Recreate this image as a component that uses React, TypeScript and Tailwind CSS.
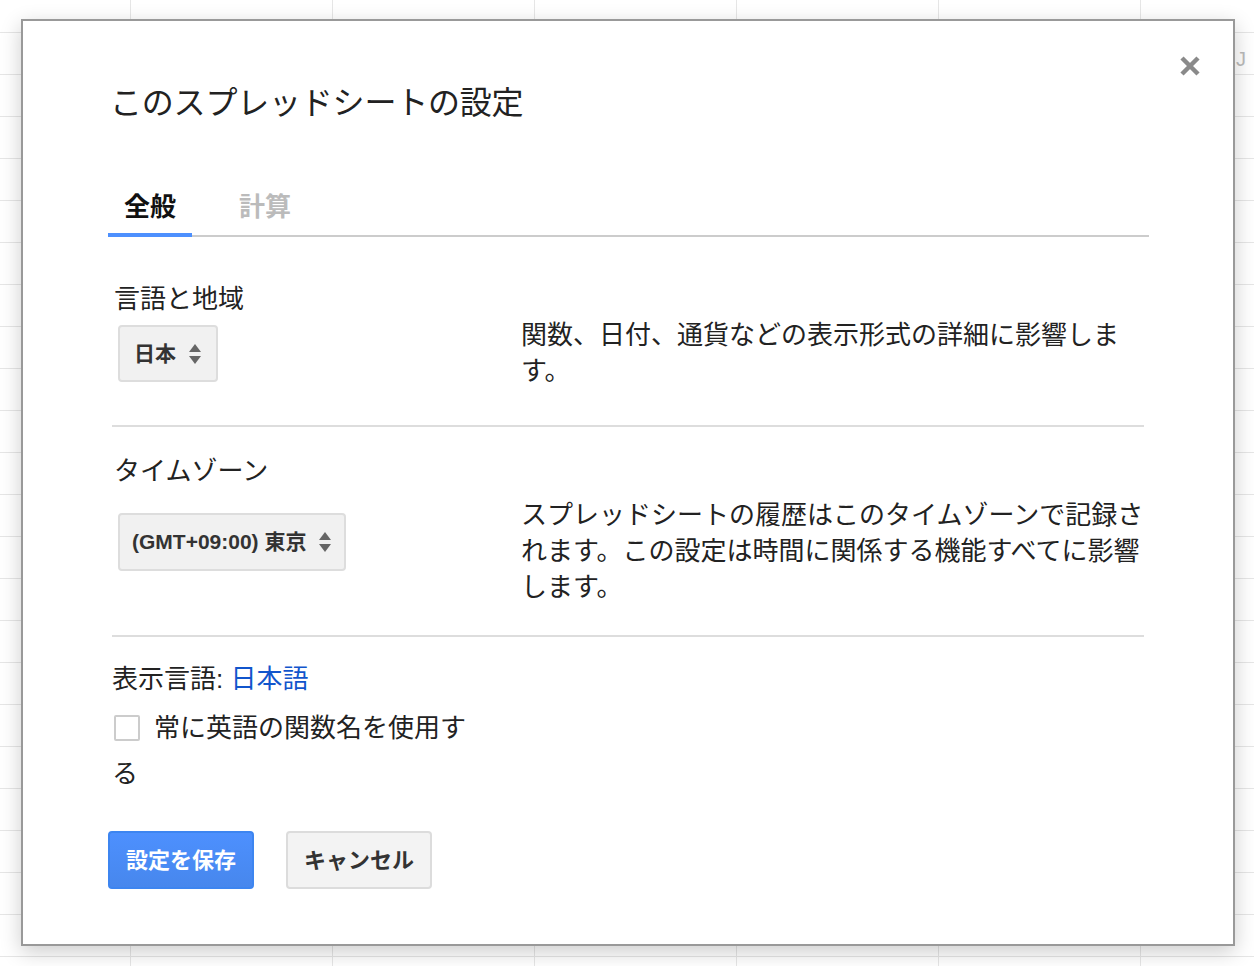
export default function App() {
  const jp = { fontFamily: '"Liberation Sans", "Noto Sans CJK JP", sans-serif' };
  const Arrows = () => (
    <svg width="14" height="22" viewBox="0 0 14 22" className="ml-3">
      <path d="M7 1 L13 9 L1 9 Z" fill="#666" />
      <path d="M7 21 L13 13 L1 13 Z" fill="#666" />
    </svg>
  );
  return (
    <div
      className="relative w-[1254px] h-[966px] overflow-hidden bg-white bg-[repeating-linear-gradient(to_bottom,transparent_0,transparent_41px,#e6e6e6_41px,#e6e6e6_42px),repeating-linear-gradient(to_right,transparent_0,transparent_201px,#e6e6e6_201px,#e6e6e6_202px)] bg-[position:-71px_-9px]"
      style={jp}
    >
      <div className="absolute right-[8px] top-[44px] text-[20px] text-[#bbb]">J</div>
      <div className="absolute left-[21px] top-[19px] w-[1214px] h-[927px] bg-white border-2 border-[#999] shadow-[0_6px_20px_rgba(0,0,0,0.2)] pl-[85px] pr-[84px] pt-[60px]">
        <svg className="absolute left-[1156px] top-[34px]" width="22" height="22" viewBox="0 0 22 22">
          <path d="M3 3 L19 19 M19 3 L3 19" stroke="#8a8a8a" strokeWidth="4.5" />
        </svg>
        <h1 className="text-[32px] leading-[44px] text-[#222] tracking-[-0.2px] ml-[2px]">このスプレッドシートの設定</h1>
        <div className="mt-[64px] flex border-b-2 border-[#ccc] h-[48px]">
          <div className="w-[84px] h-[48px] border-b-4 border-[#4d90fe] text-center font-bold text-[26px] leading-[36px] text-[#111]">全般</div>
          <div className="ml-[47px] font-bold text-[26px] leading-[36px] text-[#bbb]">計算</div>
        </div>

        <div className="mr-[5px] ml-[4px] border-b-2 border-[#ddd] pt-[44px] pb-[36px]">
          <div className="text-[26px] leading-[36px] text-[#222] ml-[2px]">言語と地域</div>
          <div className="grid grid-cols-[409px_1fr]">
            <div className="pt-[8px]">
              <div className="inline-flex items-center h-[57px] px-[14px] bg-[#f1f1f1] border-2 border-[#ddd] rounded-[4px] ml-[6px] font-bold text-[21px] text-[#333]">
                日本<Arrows />
              </div>
            </div>
            <div className="text-[26px] leading-[36px] text-[#222] pr-[20px]">関数、日付、通貨などの表示形式の詳細に影響します。</div>
          </div>
        </div>

        <div className="mr-[5px] ml-[4px] border-b-2 border-[#ddd] pt-[26px] pb-[30px]">
          <div className="text-[26px] leading-[36px] text-[#222] ml-[2px]">タイムゾーン</div>
          <div className="grid grid-cols-[409px_1fr] mt-[8px]">
            <div className="pt-[16px]">
              <div className="inline-flex items-center h-[58px] px-[12px] bg-[#f1f1f1] border-2 border-[#ddd] rounded-[4px] ml-[6px] font-bold text-[21px] text-[#333]">
                (GMT+09:00) 東京<Arrows />
              </div>
            </div>
            <div className="text-[26px] leading-[36px] text-[#222]">スプレッドシートの履歴はこのタイムゾーンで記録されます。この設定は時間に関係する機能すべてに影響します。</div>
          </div>
        </div>

        <div className="pt-[24px] ml-[4px] text-[26px] leading-[36px] text-[#222]">
          表示言語: <span className="text-[#1155cc]">日本語</span>
        </div>
        <div className="mt-[8px] ml-[4px] w-[356px] text-[26px] leading-[46px] text-[#222]">
          <span className="inline-block align-[-4px] w-[26px] h-[26px] border-2 border-[#ccc] rounded-[2px] mr-[14px] ml-[2px]"></span>
          常に英語の関数名を使用する
        </div>
        <div className="mt-[34px] flex gap-[32px]">
          <button className="w-[146px] h-[58px] rounded-[4px] border-2 border-[#3d85f0] bg-[linear-gradient(#4d90fe,#4787ed)] text-white font-bold text-[22px]">設定を保存</button>
          <button className="w-[146px] h-[58px] rounded-[4px] border-2 border-[#dcdcdc] bg-[#f3f3f3] text-[#333] font-bold text-[22px]">キャンセル</button>
        </div>
      </div>
    </div>
  );
}
